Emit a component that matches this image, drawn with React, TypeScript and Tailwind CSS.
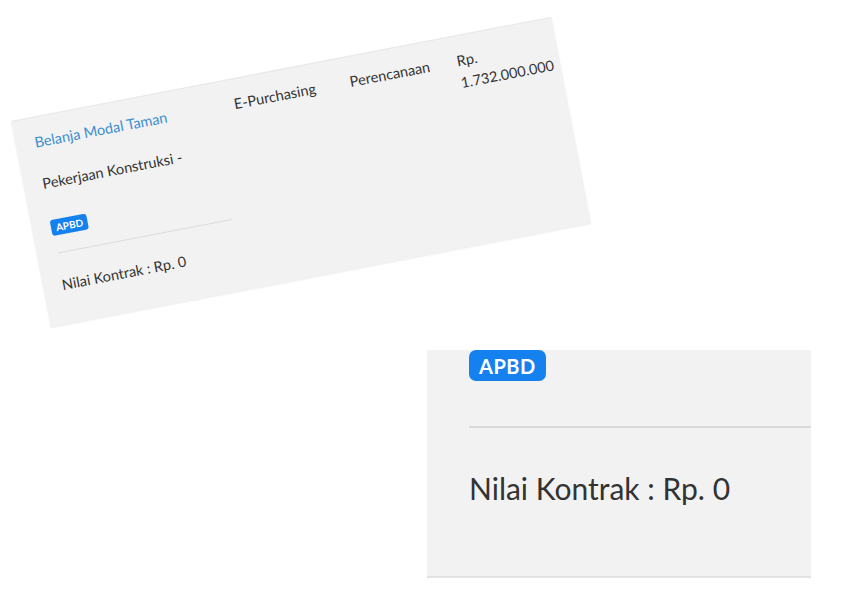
import React from 'react';

const font = { fontFamily: 'Lato, "Noto Sans", sans-serif' };

const Badge: React.FC<{ big?: boolean }> = ({ big }) =>
  big ? (
    <span className="inline-flex h-[31px] items-center rounded-[7px] bg-[#1581ee] px-[10px] text-[20px] font-bold tracking-[0.5px] text-white">
      APBD
    </span>
  ) : (
    <span className="inline-flex h-4 items-center rounded-[3px] bg-[#1581ee] px-[5px] text-[10px] font-bold text-white">
      APBD
    </span>
  );

// one row of the paket table, as it sits in the photo
const PaketRow: React.FC = () => (
  <div className="flex h-full w-full border-t border-[#e6e8ec] bg-[#f2f2f2] pt-[14px] text-[14.5px] leading-[22px] text-[#333] shadow-[0_1px_2px_rgba(0,0,0,0.08)]">
    <div className="w-[222px] shrink-0 pl-[19px] pr-[24px]">
      <a className="block text-[#3a8fd0]">Belanja Modal Taman</a>
      <p className="mt-5">Pekerjaan Konstruksi -</p>
      <div className="mt-[26px] flex">
        <Badge />
      </div>
      <div className="mt-[17px] ml-[2px] border-t border-[#dcdcdc]" />
      <p className="mt-[21px]">Nilai Kontrak : Rp. 0</p>
    </div>
    <div className="w-[118px] shrink-0">E-Purchasing</div>
    <div className="w-[109px] shrink-0">Perencanaan</div>
    <div className="flex-1">
      <div>Rp.</div>
      <div>1.732.000.000</div>
    </div>
  </div>
);

export default function App() {
  return (
    <div className="h-[599px] w-[866px] overflow-hidden bg-white" style={font}>
      <div className="ml-[26px] mt-[67px] h-[210px] w-[550px] rotate-[-10.9deg]">
        <PaketRow />
      </div>

      {/* magnified detail of the contract value */}
      <div className="ml-[427px] mt-[73px] h-[228px] w-[384px] overflow-hidden border-b-2 border-[#e2e2e2] bg-[#f2f2f2] pl-[42px] text-[#333]">
        <div className="flex">
          <Badge big />
        </div>
        <div className="mt-[45px] border-t-2 border-[#d9d9d9]" />
        <p className="mt-[42px] text-[30px] leading-[1.2]">Nilai Kontrak : Rp. 0</p>
      </div>
    </div>
  );
}
